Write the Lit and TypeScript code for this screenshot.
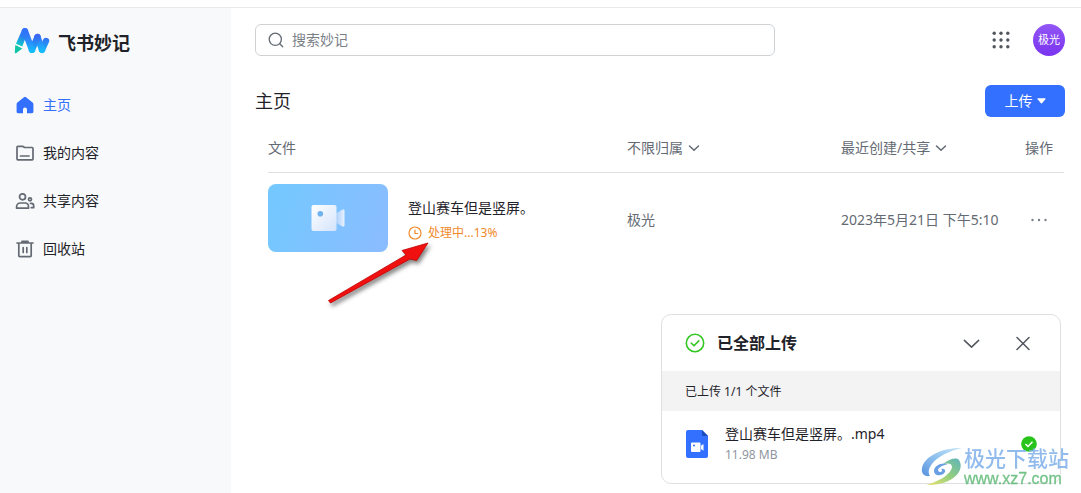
import { LitElement, html, css, svg } from "lit";
import { customElement, property } from "lit/decorators.js";

const chevron = (size: number, width: number) => html`<svg
  width=${size} height=${size} viewBox="0 0 12 12" fill="none" stroke="currentColor"
  stroke-width=${width} stroke-linecap="round" stroke-linejoin="round" aria-hidden="true">
  <path d="M1.500 4 6 8.300 10.500 4" />
</svg>`;

const navIcons = {
  home: svg`<path fill="currentColor" d="M9 .8a1.6 1.6 0 0 1 1 .4l6.600 5.300c.5.4.8 1 .8 1.600v7.700c0 .8-.6 1.400-1.400 1.400h-5v-3.700a2 2 0 0 0-4 0v3.700H2c-.8 0-1.400-.6-1.400-1.400V8.100c0-.6.3-1.200.8-1.600L8 1.200a1.600 1.600 0 0 1 1-.4z"/>`,
  folder: svg`<g fill="none" stroke="currentColor" stroke-width="1.700" stroke-linejoin="round" stroke-linecap="round"><path d="M1 15V3.300c0-.6.4-1 1-1h5l1.500 1.200H16c.6 0 1 .4 1 1V15c0 .5-.4.8-.8.8H1.800A.8.8 0 0 1 1 15z"/><path d="M4.500 12h8.500"/></g>`,
  people: svg`<g fill="none" stroke="currentColor" stroke-width="1.700" stroke-linejoin="round" stroke-linecap="round"><circle cx="6.500" cy="4.800" r="3"/><path d="M.6 16.200v-1.500c0-2.200 1.700-3.700 3.700-3.700H9c2 0 3.500 1.500 3.500 3.700v1.500z"/><circle cx="14" cy="7.300" r="1.500"/><path d="M14.500 11.300h.8c1.500 0 2.400 1.100 2.400 2.500v1.900H15.300"/></g>`,
  trash: svg`<g fill="none" stroke="currentColor" stroke-width="1.700" stroke-linejoin="round" stroke-linecap="round"><path d="M1 3h16M6 2.700V1.300h6v1.400M2.800 3.400v12.400c0 .5.4.9.9.9h10.600c.5 0 .9-.4.9-.9V3.400M7.200 7.500v5M10.800 7.500v5"/></g>`,
};

type NavIcon = keyof typeof navIcons;

@customElement("side-nav")
class SideNav extends LitElement {
  @property() current = "主页";

  private items: { label: string; icon: NavIcon }[] = [
    { label: "主页", icon: "home" },
    { label: "我的内容", icon: "folder" },
    { label: "共享内容", icon: "people" },
    { label: "回收站", icon: "trash" },
  ];

  static styles = css`
    :host { display: block; background: #f8f9fa; color: #1f2329; }
    .brand {
      display: flex; align-items: center; gap: 8px;
      padding: 15px 14px 0; height: 40px;
      font-size: 18px; line-height: 24px; font-weight: 700;
    }
    .brand svg { margin-bottom: 4px; }
    .list { list-style: none; margin: 0; padding: 18px 0 0; }
    .link {
      display: flex; align-items: center; gap: 9px; height: 48px; padding: 0 16px;
      color: #1f2329; text-decoration: none; font-size: 14px; line-height: 20px;
    }
    .link svg { color: #646a73; flex: none; overflow: visible; }
    .link.active, .link.active svg { color: #3370ff; }
  `;

  render() {
    return html`
      <div class="brand">
        <svg width="36" height="28" viewBox="0 0 36 28" fill="none" aria-hidden="true">
          <defs>
            <linearGradient id="teal" gradientUnits="userSpaceOnUse" x1="11" y1="3" x2="5" y2="19"><stop stop-color="#3370ff"/><stop offset=".4" stop-color="#2b7df2"/><stop offset="1" stop-color="#0ed3c2"/></linearGradient>
            <linearGradient id="blue" gradientUnits="userSpaceOnUse" x1="0" y1="4" x2="0" y2="25"><stop stop-color="#336df4"/><stop offset=".5" stop-color="#2c8cfb"/><stop offset="1" stop-color="#12c0fb"/></linearGradient>
            <linearGradient id="deep" gradientUnits="userSpaceOnUse" x1="0" y1="9" x2="0" y2="25"><stop stop-color="#3a66f0"/><stop offset="1" stop-color="#12b6fa"/></linearGradient>
          </defs>
          <g stroke-width="6.400" stroke-linecap="round">
            <path d="M28 22.800 32 14" stroke="url(#deep)"/>
            <path d="M23.500 10 28 22.800" stroke="url(#blue)"/>
            <path d="M18 22.800 23.500 10" stroke="url(#deep)"/>
            <path d="M11 4.300 18 22.800" stroke="url(#blue)"/>
          </g>
          <path d="M8 2.900c1.400-2.900 5.500-2.400 6.200.9L8.300 19.500 2 16.700z" fill="url(#teal)"/>
          <path d="M1.300 18 8.300 21.600 2.400 26c-.8.600-1.700.1-1.600-.8z" fill="#0fc4a7"/>
        </svg>
        <span>飞书妙记</span>
      </div>
      <nav aria-label="飞书妙记">
        <ul class="list">
          ${this.items.map(
            (item) => html`<li>
              <a href="#" class="link ${item.label === this.current ? "active" : ""}">
                <svg width="18" height="18" viewBox="0 0 18 18" aria-hidden="true">${navIcons[item.icon]}</svg>
                ${item.label}
              </a>
            </li>`
          )}
        </ul>
      </nav>
    `;
  }
}

@customElement("minutes-table")
class MinutesTable extends LitElement {
  private files = [
    { name: "登山赛车但是竖屏。", progress: "处理中...13%", owner: "极光", date: "2023年5月21日 下午5:10" },
  ];

  static styles = css`
    :host { display: block; font-size: 14px; line-height: 20px; color: #646a73; }
    .table { width: 100%; table-layout: fixed; border-collapse: collapse; }
    th, td { padding: 0; text-align: left; font-weight: 400; white-space: nowrap; }
    th { height: 48px; border-bottom: 1px solid #dee0e3; }
    td { padding: 15px 0 11px; }
    td.first { padding: 11px 0; }
    .owner { width: 214px; }
    .date { width: 184px; }
    .action { width: 39px; }
    button {
      display: inline-flex; align-items: center; gap: 5px; padding: 0; border: 0;
      background: none; color: inherit; font: inherit; cursor: pointer;
    }
    .file { display: flex; align-items: center; gap: 20px; }
    .thumb {
      display: flex; align-items: center; justify-content: center; flex: none;
      width: 120px; height: 68px; border-radius: 8px;
      background: linear-gradient(110deg, #73c9ff, #8bbcff);
    }
    .text { padding-top: 4px; }
    .name { color: #1f2329; }
    .state { display: flex; align-items: center; gap: 6px; padding-top: 6px; font-size: 12px; line-height: 18px; color: #f0892a; }
    .more { display: flex; width: 28px; justify-content: center; height: 20px; }
  `;

  render() {
    return html`
      <table class="table">
        <thead>
          <tr>
            <th scope="col">文件</th>
            <th scope="col" class="owner"><button type="button">不限归属 ${chevron(12, 1.5)}</button></th>
            <th scope="col" class="date"><button type="button">最近创建/共享 ${chevron(12, 1.5)}</button></th>
            <th scope="col" class="action">操作</th>
          </tr>
        </thead>
        <tbody>
          ${this.files.map(
            (f) => html`<tr>
              <td class="first">
                <div class="file">
                  <div class="thumb">
                    <svg width="34" height="26" viewBox="0 0 34 26" aria-hidden="true">
                      <defs>
                        <linearGradient id="body" x1="0" y1="0" x2="1" y2="1"><stop stop-color="#fff"/><stop offset="1" stop-color="#d3e3fc"/></linearGradient>
                        <linearGradient id="lens" x1="0" y1="0" x2="1" y2="0"><stop stop-color="#a9cdfb"/><stop offset="1" stop-color="#eaf3ff"/></linearGradient>
                      </defs>
                      <path d="M25 8.500 31.500 4.600c1-.5 2 0 2 1v15c0 1-1 1.500-2 1L25 17.700z" fill="url(#lens)"/>
                      <rect x=".5" width="25" height="26" rx="2" fill="url(#body)"/>
                      <circle cx="9.300" cy="8.800" r="2.800" fill="#70b2ee"/>
                    </svg>
                  </div>
                  <div class="text">
                    <div class="name">${f.name}</div>
                    <div class="state">
                      <svg width="14" height="14" viewBox="0 0 14 14" fill="none" stroke="currentColor" stroke-width="1.200" stroke-linecap="round" aria-hidden="true">
                        <circle cx="7" cy="7" r="6"/><path d="M7 4v3.500h2.800"/>
                      </svg>
                      ${f.progress}
                    </div>
                  </div>
                </div>
              </td>
              <td>${f.owner}</td>
              <td>${f.date}</td>
              <td>
                <button type="button" class="more" aria-label="操作">
                  <svg width="18" height="4" viewBox="0 0 18 4" fill="#7b8087" aria-hidden="true">
                    <circle cx="2.500" cy="2" r="1.200"/><circle cx="9" cy="2" r="1.200"/><circle cx="15.500" cy="2" r="1.200"/>
                  </svg>
                </button>
              </td>
            </tr>`
          )}
        </tbody>
      </table>
    `;
  }
}

@customElement("upload-panel")
class UploadPanel extends LitElement {
  static styles = css`
    :host {
      display: block; box-sizing: border-box; width: 400px; background: #fff;
      border: 1px solid #dee0e3; border-radius: 10px; overflow: hidden; color: #1f2329;
    }
    .head { display: flex; align-items: center; height: 56px; padding: 0 28px 0 23px; }
    .title { flex: 1; margin: 0 0 0 12px; font-size: 16px; line-height: 24px; font-weight: 700; }
    button { display: flex; padding: 0; border: 0; background: none; color: #51565d; cursor: pointer; }
    .tools { display: flex; gap: 32px; }
    .count { background: #f3f3f4; padding: 11px 23px 9px; font-size: 12px; line-height: 20px; }
    .item { display: flex; align-items: center; gap: 16px; height: 72px; padding: 0 23px; box-sizing: border-box; }
    .info { flex: 1; padding-bottom: 6px; }
    .name { font-size: 14px; line-height: 22px; }
    .size { font-size: 12px; line-height: 20px; color: #8f959e; }
    .doc, .ok { padding-bottom: 6px; display: flex; }
  `;

  render() {
    return html`
      <div class="head">
        <svg width="20" height="20" viewBox="0 0 20 20" fill="none" stroke="#34c724" stroke-width="1.600" stroke-linecap="round" stroke-linejoin="round" aria-hidden="true">
          <circle cx="10" cy="10" r="8.700"/><path d="m6.200 10 2.800 2.800 4.800-4.900"/>
        </svg>
        <h2 class="title">已全部上传</h2>
        <div class="tools">
          <button type="button" aria-label="收起">${chevron(19, 0.95)}</button>
          <button type="button" aria-label="关闭">
            <svg width="19" height="19" viewBox="0 0 19 19" fill="none" stroke="currentColor" stroke-width="1.500" stroke-linecap="round" aria-hidden="true"><path d="m4 3.500 12 12m0-12-12 12"/></svg>
          </button>
        </div>
      </div>
      <div class="count">已上传 1/1 个文件</div>
      <div class="item">
        <div class="doc">
          <svg width="24" height="28" viewBox="0 0 24 28" aria-hidden="true">
            <path d="M3 0h14l6 6v20a2 2 0 0 1-2 2H3a2 2 0 0 1-2-2V2a2 2 0 0 1 2-2z" fill="#3370ff"/>
            <path d="M17 0l6 6h-4.500A1.500 1.500 0 0 1 17 4.500z" fill="#1c4cba"/>
            <rect x="6" y="12.500" width="9.500" height="9.500" rx="1" fill="#fff"/>
            <path d="M16 15.800 18.500 14v6.800L16 19z" fill="#fff"/>
            <circle cx="9" cy="15.500" r="1" fill="#3370ff"/>
          </svg>
        </div>
        <div class="info">
          <div class="name">登山赛车但是竖屏。.mp4</div>
          <div class="size">11.98 MB</div>
        </div>
        <div class="ok">
          <svg width="16" height="16" viewBox="0 0 16 16" aria-hidden="true">
            <circle cx="8" cy="8" r="7.800" fill="#28c31b"/><path d="m4.500 8 2.500 2.500 4.500-4.700" fill="none" stroke="#fff" stroke-width="1.500"/>
          </svg>
        </div>
      </div>
    `;
  }
}

@customElement("site-mark")
class SiteMark extends LitElement {
  static styles = css`
    :host { display: flex; align-items: center; gap: 1px; opacity: 0.85; pointer-events: none; }
    .cn { font-size: 21px; line-height: 24px; color: #7fb0ea; font-weight: 500; white-space: nowrap; }
    .en { font-family: "Liberation Sans", sans-serif; font-size: 16px; line-height: 18px; color: #5cb874; -webkit-text-stroke: 0.3px #5cb874; }
  `;

  render() {
    return html`
      <svg width="42" height="40" viewBox="0 0 42 40" aria-hidden="true">
        <defs>
          <linearGradient id="top" x1="1" y1="0" x2="0" y2="1"><stop stop-color="#bfe4f8"/><stop offset=".5" stop-color="#7db8ec"/><stop offset="1" stop-color="#3c7fda"/></linearGradient>
          <linearGradient id="low" x1="1" y1="0" x2="0" y2="1"><stop stop-color="#44a8ae"/><stop offset=".5" stop-color="#83c765"/><stop offset="1" stop-color="#efe25a"/></linearGradient>
        </defs>
        <path d="M41 1C23 0 3 9 1 21c-1 5 2 9 8 8-5-8 6-22 32-28z" fill="url(#top)"/>
        <path d="M38 13c7 11-8 26-33 25 11-3 25-10 26-18 0-4-4-4-9-3 6-5 13-7 16-4z" fill="url(#low)"/>
        <path d="M27 17c-7-2-14 2-14 7 0 5 8 6 11 1 1-3-2-4-4-3 2 1 1 3-1 3-4-1-2-6 8-8z" fill="#4f8fdf"/>
      </svg>
      <div>
        <div class="cn">极光下载站</div>
        <div class="en">www.xz7.com</div>
      </div>
    `;
  }
}

@customElement("app-root")
class AppRoot extends LitElement {
  static styles = css`
    :host {
      display: flex; flex-direction: column; box-sizing: border-box; position: relative;
      min-height: 100vh; padding-top: 7px; background: #fff; color: #1f2329;
      font-family: "Noto Sans", "Noto Sans CJK SC", sans-serif; overflow: hidden;
    }
    .shell { flex: 1; display: grid; grid-template-columns: 231px minmax(0, 1fr); border-top: 1px solid #e8e9eb; }
    .main { padding: 16px 16px 0 24px; }
    .top { display: flex; align-items: center; justify-content: space-between; }
    .search {
      display: flex; align-items: center; gap: 8px; box-sizing: border-box;
      width: 520px; height: 32px; padding: 0 12px;
      border: 1px solid #d0d3d6; border-radius: 6px; color: #646a73;
    }
    .search input {
      flex: 1; min-width: 0; padding: 0; border: 0; outline: 0; background: none;
      font: inherit; font-size: 14px; line-height: 20px; color: #1f2329;
    }
    .search input::placeholder { color: #7b8087; opacity: 1; }
    .user { display: flex; align-items: center; gap: 23px; }
    .plain { display: flex; padding: 0; border: 0; background: none; cursor: pointer; }
    .avatar {
      width: 32px; height: 32px; padding: 0; border: 0; border-radius: 50%; color: #fff;
      background: linear-gradient(#9256f5, #7a35f0); font: inherit; font-size: 11px; line-height: 16px;
    }
    .heading { display: flex; align-items: center; justify-content: space-between; padding-top: 29px; }
    .heading h1 { margin: 0; font-size: 18px; line-height: 24px; font-weight: 400; }
    .upload {
      display: flex; align-items: center; justify-content: center; gap: 4px;
      width: 80px; height: 32px; padding: 0; border: 0; border-radius: 6px;
      background: #3370ff; color: #fff; font: inherit; font-size: 14px; line-height: 20px;
    }
    .files { padding: 7px 1px 0 13px; }
    .arrow { position: absolute; left: 320px; top: 236px; overflow: visible; pointer-events: none; filter: drop-shadow(2px 3px 2px rgba(0, 0, 0, 0.5)); }
    .panel { position: absolute; right: 20px; bottom: 9px; }
    .mark { position: absolute; right: 12px; bottom: 5px; }
  `;

  render() {
    return html`
      <div class="shell">
        <side-nav></side-nav>
        <main class="main">
          <div class="top">
            <label class="search">
              <svg width="16" height="16" viewBox="0 0 16 16" fill="none" stroke="currentColor" stroke-width="1.300" stroke-linecap="round" aria-hidden="true">
                <circle cx="7.300" cy="7.300" r="6.100"/><path d="m11.800 11.800 2.900 2.900"/>
              </svg>
              <input type="search" placeholder="搜索妙记" aria-label="搜索妙记" />
            </label>
            <div class="user">
              <button type="button" class="plain" aria-label="应用">
                <svg width="18" height="18" viewBox="0 0 18 18" fill="#51565d" aria-hidden="true">
                  ${[2.2, 9, 15.8].map((y) => [2.2, 9, 15.8].map((x) => svg`<circle cx=${x} cy=${y} r="1.700"/>`))}
                </svg>
              </button>
              <button type="button" class="avatar">极光</button>
            </div>
          </div>
          <div class="heading">
            <h1>主页</h1>
            <button type="button" class="upload">
              上传
              <svg width="9" height="6" viewBox="0 0 9 6" fill="currentColor" aria-hidden="true"><path d="M1 .3h7c.6 0 .8.600.4 1L5 5.300c-.3.400-.7.400-1 0L.6 1.300C.2.900.4.300 1 .300z"/></svg>
            </button>
          </div>
          <div class="files"><minutes-table></minutes-table></div>
        </main>
      </div>
      <svg class="arrow" width="112" height="70" viewBox="0 0 112 70" aria-hidden="true">
        <path d="M8.500 64.500 86 19 82 14.500 108 7 96.500 24.500 90 23 10.500 67z" fill="#f01010" stroke="#c00000" stroke-width=".8" stroke-linejoin="round"/>
      </svg>
      <upload-panel class="panel"></upload-panel>
      <site-mark class="mark"></site-mark>
    `;
  }
}
